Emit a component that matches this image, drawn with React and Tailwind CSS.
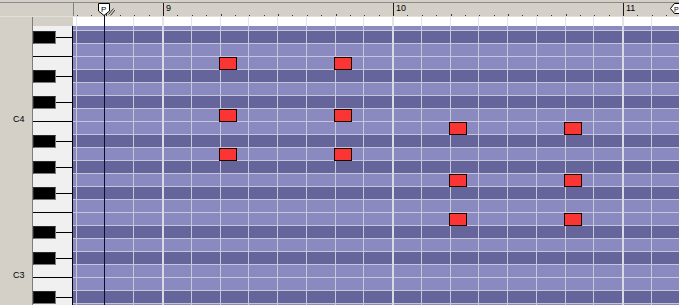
import React from 'react';

// piano roll rows, top to bottom (first and last are clipped)
const ROWS = ['G4', 'F#4', 'F4', 'E4', 'D#4', 'D4', 'C#4', 'C4', 'B3', 'A#3', 'A3', 'G#3', 'G3', 'F#3', 'F3', 'E3', 'D#3', 'D3', 'C#3', 'C3', 'B2', 'A#2', 'A2'];
const isBlack = (n) => n.includes('#');

// grid origin is x=73, y=17
const GRID_X = 73;
const GRID_Y = 17;

const NOTES = [
    { x: 219, y: 57 }, { x: 219, y: 109 }, { x: 219, y: 148 },
    { x: 334, y: 57 }, { x: 334, y: 109 }, { x: 334, y: 148 },
    { x: 449, y: 122 }, { x: 449, y: 174 }, { x: 449, y: 213 },
    { x: 564, y: 122 }, { x: 564, y: 174 }, { x: 564, y: 213 },
];

// eighth-note lines, bar every 8
const gridLines = [];
for (let k = -3; k <= 17; k++) {
    if (k === -2) continue; // under the playhead
    gridLines.push({ x: Math.floor(162.5 + 28.75 * k), bar: k % 8 === 0 });
}

const ticks = [];
for (let k = 0; k < 43; k++) {
    const x = Math.round(76.75 + 14.375 * k) - 74;
    if ((k - 6) % 16 === 0) continue;
    ticks.push({ x, tall: (k - 2) % 4 === 0 });
}

const Ruler = () => (
    <div className="flex-1 relative border-l border-[#808080] flex text-[9px] leading-[9px] text-black">
        <div className="w-[89px] shrink-0" />
        {['9', '10', '11'].map((label) => (
            <div key={label} className="w-[230px] shrink-0 border-l border-[#1c1c1c] pl-[2px] pt-[1px]">
                {label}
            </div>
        ))}
        <svg className="absolute left-0 top-0" width="605" height="13">
            {ticks.map((t) => (
                <rect key={t.x} x={t.x} y={t.tall ? 11 : 12} width="1" height={t.tall ? 2 : 1} fill="#3a3a3a" />
            ))}
        </svg>
    </div>
);

const Keyboard = () => (
    <div className="w-[40px] shrink-0 flex flex-col">
        <div className="h-[9px] shrink-0" />
        <div className="flex-1 flex flex-col bg-[#f0f0f0] border-r border-black overflow-hidden">
            {ROWS.map((n, i) => {
                if (isBlack(n)) {
                    return (
                        <div key={n} className="h-[13px] shrink-0 flex">
                            <div className="w-[23px] h-[13px] bg-black border border-[#2a2a2a] border-r-[#7a7a7a] border-b-[#7a7a7a]" />
                            <div className="flex-1 flex flex-col">
                                <div className="h-[6px]" />
                                <div className="h-px bg-black" />
                            </div>
                        </div>
                    );
                }
                const line = n.startsWith('F') || n.startsWith('C');
                return (
                    <div
                        key={n}
                        className={`${i === 0 ? 'h-[5px]' : 'h-[13px]'} shrink-0 ${line ? 'border-b border-black' : ''}`}
                    />
                );
            })}
        </div>
    </div>
);

const Grid = () => (
    <div className="flex-1 relative flex flex-col overflow-hidden">
        <div className="h-[9px] shrink-0 bg-white" />
        {ROWS.map((n, i) => (
            <div
                key={n}
                className={`${i === 0 ? 'h-[5px]' : 'h-[13px]'} shrink-0 border-b border-[#c6c6da] ${isBlack(n) ? 'bg-[#65659c]' : 'bg-[#8a8ac1]'}`}
            />
        ))}
        {gridLines.map((l) => (
            <div
                key={l.x}
                className={`absolute top-0 bottom-0 flex flex-col ${l.bar ? 'w-[2px]' : 'w-px'}`}
                style={{ left: l.x - GRID_X }}
            >
                <div className="h-[9px] bg-[#e4e4ec]" />
                <div className={`flex-1 ${l.bar ? 'bg-[#dadae6]' : 'bg-[#c8c8dc]'}`} />
            </div>
        ))}
        {NOTES.map((n) => (
            <div
                key={`${n.x}-${n.y}`}
                className="absolute w-[18px] h-[13px] bg-[#fb3434] border border-[#1a0000]"
                style={{ left: n.x - GRID_X, top: n.y - GRID_Y }}
            />
        ))}
    </div>
);

export default function App() {
    return (
        <div className="relative w-[679px] h-[305px] overflow-hidden bg-[#d4d0c8] flex flex-col font-['Liberation_Sans',Arial,sans-serif]">
            <div className="h-[2px] shrink-0" />
            <div className="h-px shrink-0 bg-[#8c8c8c]" />
            <div className="h-[14px] shrink-0 flex border-b border-[#e2e0da]">
                <div className="w-[73px] shrink-0" />
                <Ruler />
            </div>
            <div className="flex-1 min-h-0 flex">
                <div className="w-[33px] shrink-0 border-r border-[#7c7c7c] flex flex-col pl-[13px] pt-[98px] text-[9px] leading-[9px] text-black">
                    <span>C4</span>
                    <span className="mt-[147px]">C3</span>
                </div>
                <Keyboard />
                <Grid />
            </div>

            {/* playhead */}
            <div className="absolute left-[104px] top-[13px] bottom-0 w-px bg-[#0c0c30]" />
            <svg className="absolute left-[97px] top-[3px]" width="18" height="13" viewBox="0 0 18 13">
                <path d="M1.5 0.5 H12.5 V8 L7 12.5 L1.5 8 Z" fill="#fff" stroke="#000" />
                <text x="4" y="8.5" fontSize="8" fontFamily="Liberation Sans, Arial, sans-serif" fill="#000">P</text>
                <path d="M11.5 11.5 L16.5 5.5 M13.5 12.5 L18 7" stroke="#333" />
            </svg>
            <svg className="absolute left-[670px] top-[3px]" width="9" height="12" viewBox="0 0 9 12">
                <path d="M0.5 5.5 L4.5 0.5 H10 V10.5 H4.5 Z" fill="#fff" stroke="#000" />
                <text x="4" y="9" fontSize="7" fontFamily="Liberation Sans, Arial, sans-serif" fill="#000">P</text>
            </svg>
        </div>
    );
}
